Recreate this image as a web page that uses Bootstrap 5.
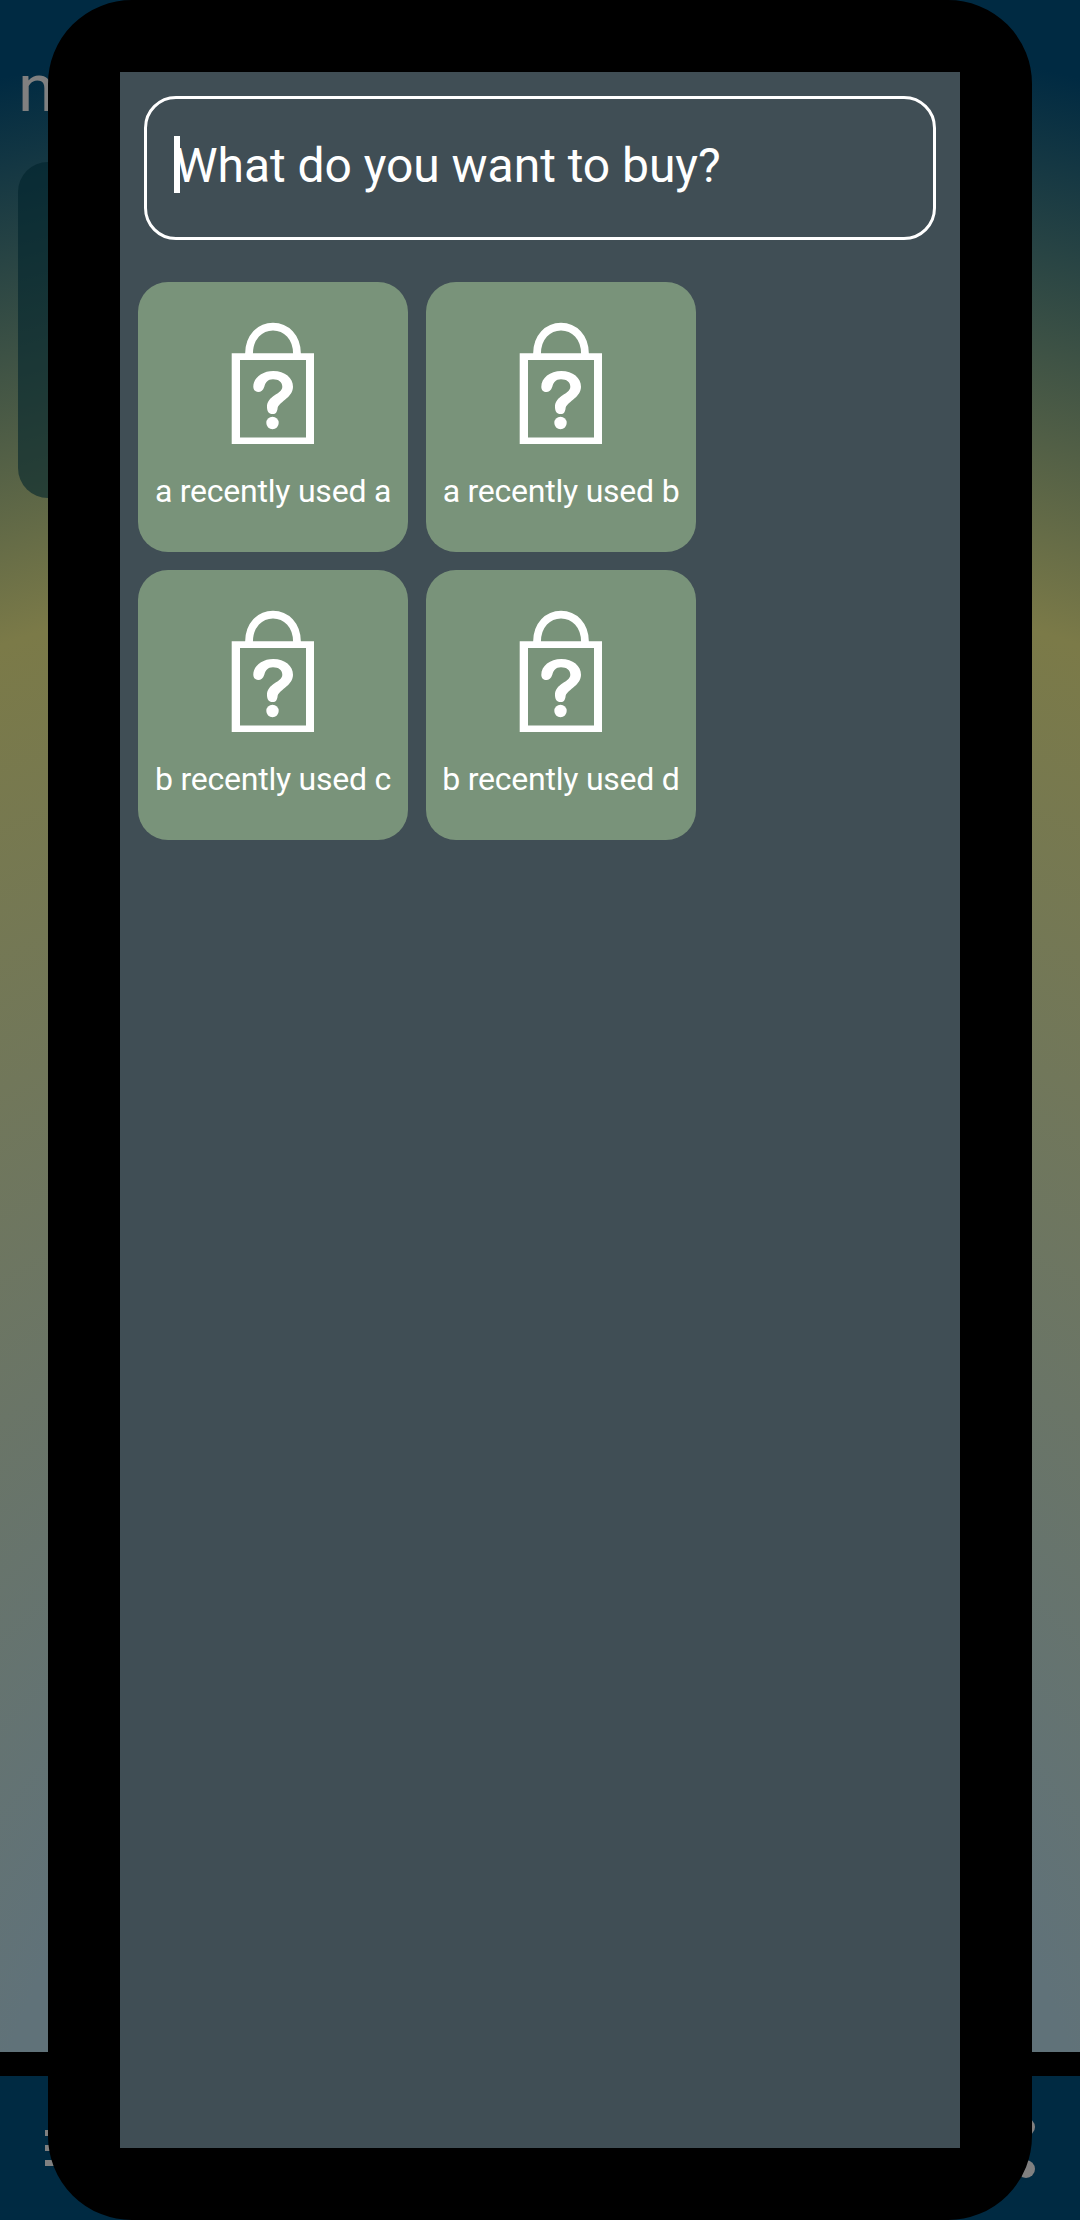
<!DOCTYPE html>
<html lang="en">
<head>
<meta charset="utf-8">
<meta name="viewport" content="width=device-width, initial-scale=1">
<title>Shopping list</title>
<link href="https://cdn.jsdelivr.net/npm/bootstrap@5.3.0/dist/css/bootstrap.min.css" rel="stylesheet">
<style>
body{font-family:Roboto,"Liberation Sans",sans-serif;background:#000;color:#fff;width:1080px;height:2220px;overflow:hidden}
.backdrop-page{height:2220px}
.list-area{height:2052px;margin-bottom:24px;padding:47px 18px 0;background:radial-gradient(circle 2220px at 540px 2220px,#607279 25%,#7b7a48 75%,#002a42 99.500%)}
.list-title{font-size:67px;line-height:83px;color:#808080;margin-bottom:32px}
.list-tile{width:336px;height:336px;border-radius:30px;background:rgba(0,34,43,.58)}
.bottom-bar{height:144px;background:#002a42;padding:0 43px}
.dialog-frame{inset:0 48px;border:72px solid #000;border-radius:84px;background:#000}
.dialog-body{background:#404e55;padding:24px 18px}
.search-box{height:144px;border:3px solid #fff;border-radius:32px;margin:0 6px 42px;padding:37px 27px}
.caret{width:6px;height:57px;background:#fff}
.prompt{font-size:48px;line-height:60px;margin-left:-5px;letter-spacing:-.05px;white-space:nowrap}
.tiles{gap:18px}
.item-tile{width:270px;height:270px;border-radius:30px;background:#79937a;padding-top:38px}
.item-name{font-size:32px;line-height:40px;letter-spacing:-.23px;margin-top:27px;white-space:nowrap}
</style>
<script src="https://cdn.jsdelivr.net/npm/bootstrap@5.3.0/dist/js/bootstrap.bundle.min.js"></script>
</head>
<body>
<svg class="d-none">
 <symbol id="bag" viewBox="0 0 84 124">
  <path d="M18 34C18 17 29 6.600 42 6.600S66 17 66 34" fill="none" stroke="#fff" stroke-width="7.800"/>
  <path fill-rule="evenodd" d="M.7 33.300h82.300V124H.7zM9 40v77.500h66V40z" fill="#fff"/>
  <path d="M22.300 66.700C22.300 58 31 51 42.300 51C54 51 62 58 62 66.700C62 77 49.500 81 46.700 87.500C46 94 43.500 94 41.300 94C38 94 36 91.500 36 87C36 75 51.300 74.500 51.300 66.700C51.300 62 47.500 59.300 42 59.300C36.500 59.300 34.500 62.500 33.300 66.700C32 70.500 30 72 27.300 72C24.500 72 22.300 70 22.300 66.700Z" fill="#fff"/>
  <circle cx="41.500" cy="103" r="6.200" fill="#fff"/>
 </symbol>
</svg>
<div class="position-relative">
 <div class="backdrop-page d-flex flex-column">
  <main class="list-area">
   <div class="list-title">n</div>
   <div class="list-tile"></div>
  </main>
  <footer class="bottom-bar d-flex align-items-center justify-content-between">
   <svg width="54" height="60" viewBox="0 0 54 60"><path d="M2 12h50v6H2zM2 27h50v6H2zM2 42h50v6H2z" fill="#808080"/></svg>
   <svg width="54" height="60" viewBox="0 0 54 60"><path d="M10 30L43 9M10 30L43 51" stroke="#808080" stroke-width="5"/><circle cx="10" cy="30" r="9" fill="#808080"/><circle cx="43" cy="9" r="9" fill="#808080"/><circle cx="43" cy="51" r="9" fill="#808080"/></svg>
  </footer>
 </div>
 <div class="dialog-frame position-absolute d-flex">
  <section class="dialog-body flex-fill">
   <div class="search-box d-flex"><span class="caret flex-shrink-0"></span><span class="prompt">What do you want to buy?</span></div>
   <div class="tiles d-flex flex-wrap">
    <div class="item-tile d-flex flex-column align-items-center"><svg width="84" height="124"><use href="#bag"/></svg><div class="item-name">a recently used a</div></div>
    <div class="item-tile d-flex flex-column align-items-center"><svg width="84" height="124"><use href="#bag"/></svg><div class="item-name">a recently used b</div></div>
    <div class="item-tile d-flex flex-column align-items-center"><svg width="84" height="124"><use href="#bag"/></svg><div class="item-name">b recently used c</div></div>
    <div class="item-tile d-flex flex-column align-items-center"><svg width="84" height="124"><use href="#bag"/></svg><div class="item-name">b recently used d</div></div>
   </div>
  </section>
 </div>
</div>
</body>
</html>
